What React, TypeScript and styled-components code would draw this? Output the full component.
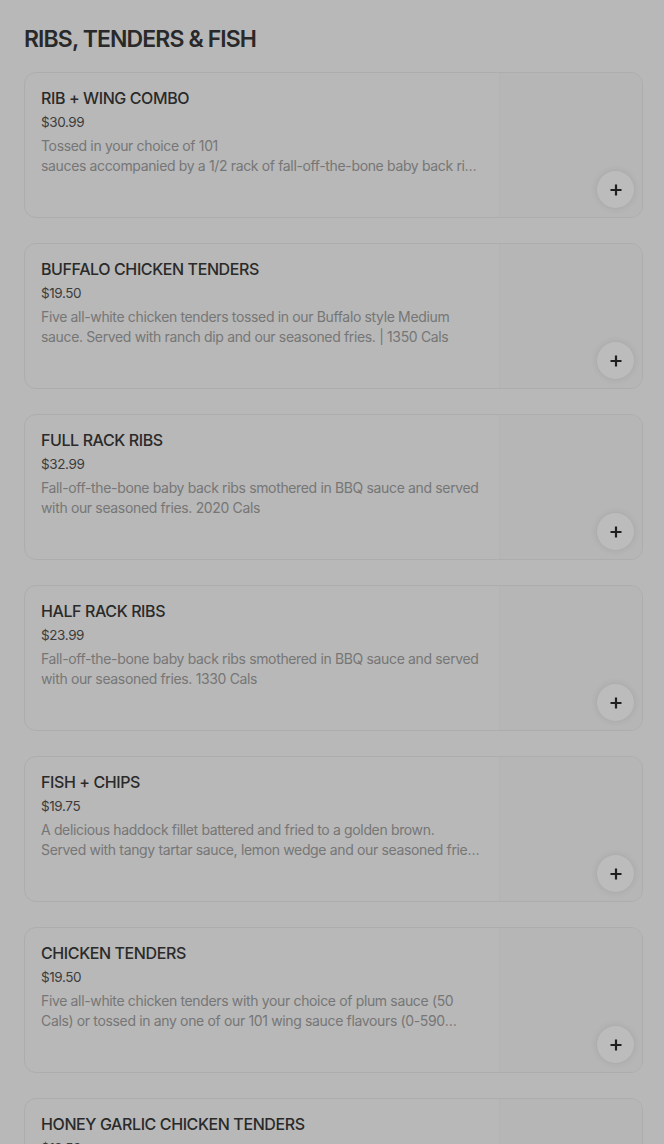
import { createGlobalStyle, styled } from 'styled-components';

const GlobalStyle = createGlobalStyle`
  html, body {
    margin: 0;
    padding: 0;
    background: #b8b8b8;
    font-family: Inter, "Liberation Sans", Arial, sans-serif;
  }
`;

const Page = styled.main`
  padding: 23px 21px 0 24px;
  display: flex;
  flex-direction: column;
`;

const SectionTitle = styled.h2`
  margin: 0 0 17px;
  font-size: 23px;
  line-height: 32px;
  font-weight: 600;
  letter-spacing: -0.9px;
  color: #292929;
`;

const List = styled.ul`
  list-style: none;
  margin: 0;
  padding: 0;
  display: flex;
  flex-direction: column;
  gap: 25px;
`;

const Card = styled.li`
  position: relative;
  display: flex;
  height: 146px;
  border: 1px solid #adadad;
  border-radius: 12px;
  overflow: hidden;
  box-sizing: border-box;
`;

const Info = styled.div`
  flex: 1;
  padding: 14px 16px 0 16px;
  display: flex;
  flex-direction: column;
  gap: 3px;
`;

const ItemName = styled.h3`
  margin: 0;
  font-size: 16px;
  line-height: 22px;
  font-weight: 500;
  letter-spacing: -0.4px;
  color: #2a2a2a;
`;

const Price = styled.span`
  font-size: 13.5px;
  line-height: 20px;
  letter-spacing: -0.4px;
  color: #3c3c3c;
  margin-bottom: 1px;
`;

const Desc = styled.p`
  margin: 0;
  max-width: 446px;
  font-size: 14px;
  line-height: 20px;
  letter-spacing: -0.35px;
  color: #767676;
  white-space: pre-line;
  display: -webkit-box;
  -webkit-line-clamp: 2;
  -webkit-box-orient: vertical;
  overflow: hidden;
`;

const Thumb = styled.div`
  width: 142px;
  flex-shrink: 0;
  background: #b6b6b6;
  border-left: 1px solid #b3b3b3;
`;

const AddButton = styled.button`
  position: absolute;
  right: 8px;
  bottom: 9px;
  width: 37px;
  height: 37px;
  border: none;
  border-radius: 50%;
  background: #bcbcbc;
  box-shadow: 0 0 7px rgba(0, 0, 0, 0.1);
  display: flex;
  align-items: center;
  justify-content: center;
  padding: 0;
  cursor: pointer;
`;

type Item = { name: string; price: string; desc: string };

const items: Item[] = [
  {
    name: 'RIB + WING COMBO',
    price: '$30.99',
    desc: 'Tossed in your choice of 101\nsauces accompanied by a 1/2 rack of fall-off-the-bone baby back ribs and our seasoned fries.',
  },
  {
    name: 'BUFFALO CHICKEN TENDERS',
    price: '$19.50',
    desc: 'Five all-white chicken tenders tossed in our Buffalo style Medium sauce. Served with ranch dip and our seasoned fries. | 1350 Cals',
  },
  {
    name: 'FULL RACK RIBS',
    price: '$32.99',
    desc: 'Fall-off-the-bone baby back ribs smothered in BBQ sauce and served with our seasoned fries. 2020 Cals',
  },
  {
    name: 'HALF RACK RIBS',
    price: '$23.99',
    desc: 'Fall-off-the-bone baby back ribs smothered in BBQ sauce and served with our seasoned fries. 1330 Cals',
  },
  {
    name: 'FISH + CHIPS',
    price: '$19.75',
    desc: 'A delicious haddock fillet battered and fried to a golden brown.\nServed with tangy tartar sauce, lemon wedge and our seasoned fries. 1190 Cals',
  },
  {
    name: 'CHICKEN TENDERS',
    price: '$19.50',
    desc: 'Five all-white chicken tenders with your choice of plum sauce (50 Cals) or tossed in any one of our 101 wing sauce flavours (0-590 Cals).',
  },
  {
    name: 'HONEY GARLIC CHICKEN TENDERS',
    price: '$19.50',
    desc: 'Five all-white chicken tenders tossed in our Honey Garlic sauce. Served with ranch dip and our seasoned fries.',
  },
];

const Plus = () => (
  <svg width="12" height="12" viewBox="0 0 12 12">
    <path d="M6 0.5v11M0.5 6h11" stroke="#1f1f1f" strokeWidth="2.2" />
  </svg>
);

const App = () => (
  <>
    <GlobalStyle />
    <Page>
      <SectionTitle>RIBS, TENDERS &amp; FISH</SectionTitle>
      <List>
        {items.map((item) => (
          <Card key={item.name}>
            <Info>
              <ItemName>{item.name}</ItemName>
              <Price>{item.price}</Price>
              <Desc>{item.desc}</Desc>
            </Info>
            <Thumb />
            <AddButton aria-label={`Add ${item.name}`}>
              <Plus />
            </AddButton>
          </Card>
        ))}
      </List>
    </Page>
  </>
);

export default App;
